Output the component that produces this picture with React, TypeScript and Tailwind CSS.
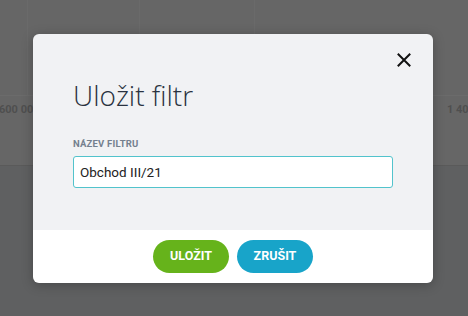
import React, { useState } from 'react';

const App: React.FC = () => {
  const [name, setName] = useState<string>('Obchod III/21');

  return (
    <div className="relative h-[316px] w-[468px] overflow-hidden font-['Roboto',sans-serif]">
      {/* page behind the overlay */}
      <div className="flex h-full flex-col">
        <div className="flex h-[165px] flex-col bg-[#666666]">
          <div className="grid h-[96px] grid-cols-[28px_112px_115px_1fr] border-b border-[#6b6b6b]">
            <div className="border-r border-[#6a6a6a]" />
            <div className="border-r border-[#6a6a6a]" />
            <div className="border-r border-[#6a6a6a]" />
            <div />
          </div>
          <div className="flex items-center justify-between overflow-hidden pt-[6px] text-[11px] font-bold text-[#4f4f4f]">
            <span className="-ml-[1px]">600 000</span>
            <span className="w-[21px] overflow-hidden whitespace-nowrap">1 400</span>
          </div>
        </div>
        <div className="flex-1 border-t border-[#5a5a5a] bg-[#5f6061]" />
      </div>

      {/* modal */}
      <div className="absolute left-[33px] top-[34px] flex w-[400px] flex-col overflow-hidden rounded-[6px] shadow-[0_2px_12px_rgba(0,0,0,0.25)]">
        <div className="relative bg-[#f1f2f4] px-[40px] pb-[42px] pt-[42px]">
          <button className="absolute right-[20px] top-[17px] flex h-[18px] w-[18px] items-center justify-center text-[#111]">
            <svg width="16" height="16" viewBox="0 0 16 16" fill="none" stroke="currentColor" strokeWidth="2" strokeLinecap="square">
              <path d="M2.5 2.5 L13.5 13.5 M13.5 2.5 L2.5 13.5" />
            </svg>
          </button>
          <h2 className="font-['Open_Sans',sans-serif] text-[28px] font-light leading-[38px] text-[#2a3240]">Uložit filtr</h2>
          <label className="mt-[23px] block text-[9.5px] font-bold tracking-[0.2px] text-[#74808e]">NÁZEV FILTRU</label>
          <input
            autoFocus
            value={name}
            onChange={(e) => setName(e.target.value)}
            className="mt-[5px] h-[32px] w-[320px] rounded-[3px] border border-[#52c3cc] bg-white px-[6px] text-[13.5px] text-[#222] caret-[#222] outline-none"
          />
        </div>
        <div className="flex h-[53px] items-center justify-center gap-[8px] bg-white pb-[1px]">
          <button className="h-[33px] w-[76px] rounded-full bg-[#66b31b] text-[12.5px] font-bold text-white">ULOŽIT</button>
          <button className="h-[33px] w-[76px] rounded-full bg-[#18a4c9] text-[12.5px] font-bold text-white">ZRUŠIT</button>
        </div>
      </div>
    </div>
  );
};

export default App;
